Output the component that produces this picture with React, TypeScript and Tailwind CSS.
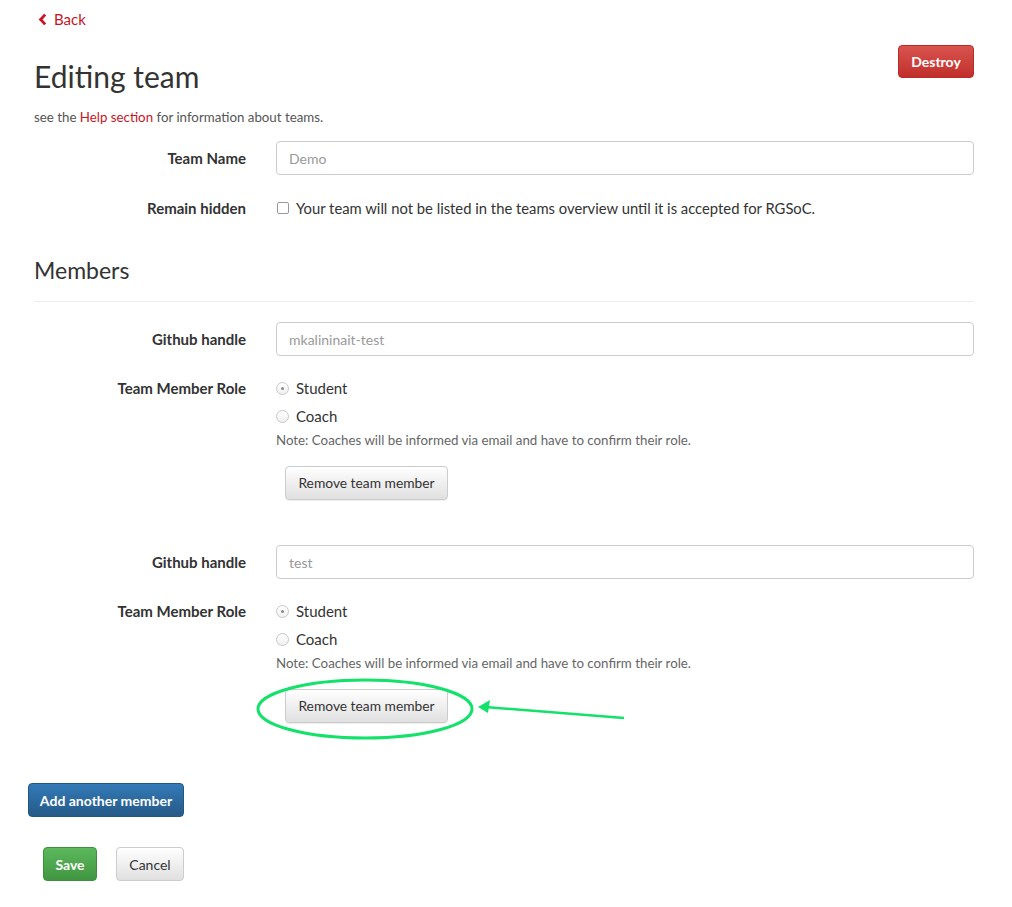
import React from "react";

const labelCls =
  "w-[212px] shrink-0 text-right text-[15px] font-bold text-[#333] pr-0";

function Radio({ checked, label }: { checked?: boolean; label: string }) {
  return (
    <div className="flex items-center h-[20px]">
      <span className="w-[13px] h-[13px] rounded-full border border-[#c8c8c8] bg-gradient-to-b from-white to-[#f0f0f0] flex items-center justify-center">
        {checked ? <span className="w-[3px] h-[3px] rounded-full bg-[#888]" /> : null}
      </span>
      <span className="ml-[7px] text-[15px] text-[#333]">{label}</span>
    </div>
  );
}

function MemberFields({ handle }: { handle: string }) {
  return (
    <div>
      <div className="flex items-center">
        <label className={labelCls}>Github handle</label>
        <div className="ml-[30px] flex-1 h-[34px] border border-[#ccc] rounded-[4px] flex items-center pl-[12px] text-[14px] text-[#999]">
          {handle}
        </div>
      </div>
      <div className="flex items-start mt-[22px]">
        <label className={labelCls + " leading-[20px]"}>Team Member Role</label>
        <div className="ml-[30px] flex-1">
          <Radio checked label="Student" />
          <div className="mt-[8px]">
            <Radio label="Coach" />
          </div>
          <p className="mt-[5px] text-[13.3px] leading-[18px] text-[#666]">
            Note: Coaches will be informed via email and have to confirm their role.
          </p>
          <button className="mt-[17px] ml-[9px] w-[163px] h-[34px] rounded-[4px] border border-[#ccc] bg-gradient-to-b from-white to-[#e0e0e0] text-[13.8px] leading-[32px] text-[#333] shadow-[0_1px_1px_rgba(0,0,0,0.075)]">
            Remove team member
          </button>
        </div>
      </div>
    </div>
  );
}

export default function App() {
  return (
    <div
      className="relative w-full min-h-[907px] bg-white text-[#333]"
      style={{ fontFamily: "Lato, 'Open Sans', sans-serif" }}
    >
      <div className="w-[940px] ml-[34px]">
        <div className="pt-[8px] h-[29px]">
          <a className="inline-flex items-center h-[22px] ml-[4px] text-[15px] text-[#c9141e]">
            <svg width="9" height="13" viewBox="0 0 9 13" className="mr-[7px]">
              <path d="M7.2 1.6 L2.6 6.5 L7.2 11.4" fill="none" stroke="#c9141e" strokeWidth="2.8" />
            </svg>
            Back
          </a>
        </div>

        <div className="flex justify-between items-start mt-[16px]">
          <h1 className="mt-[15px] text-[30px] leading-[33px] text-[#333]">Editing team</h1>
          <button className="w-[76px] h-[33px] rounded-[4px] border border-[#b92c28] bg-gradient-to-b from-[#d9534f] to-[#c12e2a] text-[14px] font-bold text-white">
            Destroy
          </button>
        </div>

        <p className="mt-[15px] text-[13.3px] leading-[18px] text-[#555]">
          see the <a className="text-[#c9141e]">Help section</a> for information about teams.
        </p>

        <div className="flex items-center mt-[15px]">
          <label className={labelCls}>Team Name</label>
          <div className="ml-[30px] flex-1 h-[34px] border border-[#ccc] rounded-[4px] flex items-center pl-[12px] text-[14px] text-[#999]">
            Demo
          </div>
        </div>

        <div className="flex items-center mt-[23px] h-[20px]">
          <label className={labelCls}>Remain hidden</label>
          <div className="ml-[31px] flex items-center">
            <span className="w-[12px] h-[12px] rounded-[2px] border border-[#999] bg-white" />
            <span className="ml-[7px] text-[14.8px] text-[#333]">
              Your team will not be listed in the teams overview until it is accepted for RGSoC.
            </span>
          </div>
        </div>

        <h2 className="mt-[37px] text-[23px] leading-[30px] text-[#333]">Members</h2>
        <div className="mt-[16px] border-t border-[#eee]" />

        <div className="mt-[20px]">
          <MemberFields handle="mkalininait-test" />
        </div>
        <div className="mt-[45px]">
          <MemberFields handle="test" />
        </div>

        <button className="mt-[60px] ml-[-6px] w-[156px] h-[34px] rounded-[4px] border border-[#245580] bg-gradient-to-b from-[#337ab7] to-[#265a88] text-[14px] font-bold text-white">
          Add another member
        </button>

        <div className="mt-[30px] ml-[9px] flex gap-[19px]">
          <button className="w-[54px] h-[34px] rounded-[4px] border border-[#3e8f3e] bg-gradient-to-b from-[#5cb85c] to-[#419641] text-[14px] font-bold text-white">
            Save
          </button>
          <button className="w-[68px] h-[34px] rounded-[4px] border border-[#ccc] bg-gradient-to-b from-white to-[#e0e0e0] text-[14px] text-[#333]">
            Cancel
          </button>
        </div>
      </div>

      <svg
        className="absolute left-0 top-0 pointer-events-none"
        width="1012"
        height="907"
      >
        <ellipse cx="365" cy="709" rx="107" ry="29" fill="none" stroke="#12e16a" strokeWidth="3" />
        <path d="M624 718 L485 707" stroke="#12e16a" strokeWidth="2.5" fill="none" />
        <path d="M478 707 L490 700 L488 713 Z" fill="#12e16a" />
      </svg>
    </div>
  );
}
